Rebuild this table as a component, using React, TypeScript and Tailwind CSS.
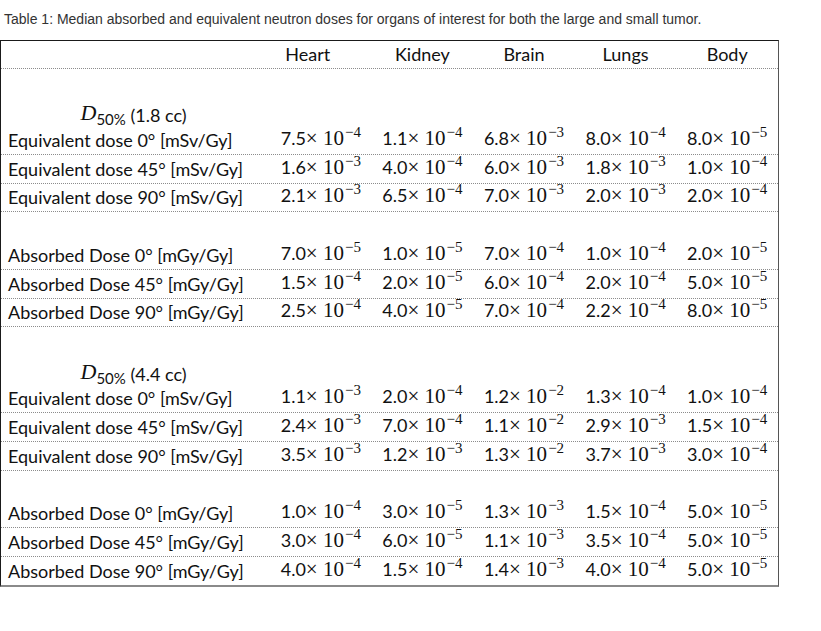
import React from "react";

type Row =
  | { kind: "blank" }
  | { kind: "d"; vol: string }
  | { kind: "data"; label: string; values: [string, string][]; last?: boolean };

const eq = (deg: string) => `Equivalent dose ${deg}° [mSv/Gy]`;
const ab = (deg: string) => `Absorbed Dose ${deg}° [mGy/Gy]`;

const p = (s: string): [string, string][] =>
  s.split(" ").map((t) => {
    const [m, e] = t.split("e");
    return [m, e.replace("-", "−")];
  });

const rows: Row[] = [
  { kind: "blank" },
  { kind: "d", vol: "1.8 cc" },
  { kind: "data", label: eq("0"), values: p("7.5e-4 1.1e-4 6.8e-3 8.0e-4 8.0e-5") },
  { kind: "data", label: eq("45"), values: p("1.6e-3 4.0e-4 6.0e-3 1.8e-3 1.0e-4") },
  { kind: "data", label: eq("90"), values: p("2.1e-3 6.5e-4 7.0e-3 2.0e-3 2.0e-4") },
  { kind: "blank" },
  { kind: "data", label: ab("0"), values: p("7.0e-5 1.0e-5 7.0e-4 1.0e-4 2.0e-5") },
  { kind: "data", label: ab("45"), values: p("1.5e-4 2.0e-5 6.0e-4 2.0e-4 5.0e-5") },
  { kind: "data", label: ab("90"), values: p("2.5e-4 4.0e-5 7.0e-4 2.2e-4 8.0e-5") },
  { kind: "blank" },
  { kind: "d", vol: "4.4 cc" },
  { kind: "data", label: eq("0"), values: p("1.1e-3 2.0e-4 1.2e-2 1.3e-4 1.0e-4") },
  { kind: "data", label: eq("45"), values: p("2.4e-3 7.0e-4 1.1e-2 2.9e-3 1.5e-4") },
  { kind: "data", label: eq("90"), values: p("3.5e-3 1.2e-3 1.3e-2 3.7e-3 3.0e-4") },
  { kind: "blank" },
  { kind: "data", label: ab("0"), values: p("1.0e-4 3.0e-5 1.3e-3 1.5e-4 5.0e-5") },
  { kind: "data", label: ab("45"), values: p("3.0e-4 6.0e-5 1.1e-3 3.5e-4 5.0e-5") },
  { kind: "data", label: ab("90"), values: p("4.0e-4 1.5e-4 1.4e-3 4.0e-4 5.0e-5"), last: true },
];

function Value({ m, e }: { m: string; e: string }) {
  return (
    <span className="whitespace-nowrap">
      <span>{m}</span>
      <span className="font-['Liberation_Serif',serif] text-[21px]">× 10</span>
      <span className="relative -top-[8px] ml-[1px] font-['Liberation_Serif',serif] text-[15px]">{e}</span>
    </span>
  );
}

const grid = "grid grid-cols-[269px_repeat(5,minmax(0,1fr))]";

export default function App() {
  return (
    <div className="w-[821px] h-[631px] bg-white text-[#111]">
      <p className="pl-[4px] pt-[11px] font-['Liberation_Sans',Arial,sans-serif] text-[14px] leading-[16px] text-[#333]">
        Table 1: Median absorbed and equivalent neutron doses for organs of interest for both the large and small tumor.
      </p>
      <div className="mt-[13px] w-[779px] border-t border-l border-t-[#1a1a1a] border-l-[#1a1a1a] border-r border-r-[#555] border-b-2 border-b-[#8a8a8a] font-['Lato','Noto_Sans',sans-serif] text-[18px] leading-none">
        <div className={`${grid} h-[28px] border-b border-dotted border-b-[#8c8c8c]`}>
          <div />
          <div className="flex items-end justify-center pb-[5px] pr-[26px]">Heart</div>
          <div className="flex items-end justify-center pb-[5px]">Kidney</div>
          <div className="flex items-end justify-center pb-[5px]">Brain</div>
          <div className="flex items-end justify-center pb-[5px]">Lungs</div>
          <div className="flex items-end justify-center pb-[5px]">Body</div>
        </div>
        {rows.map((r, i) => {
          if (r.kind === "blank") return <div key={i} className="h-[28.7px]" />;
          if (r.kind === "d")
            return (
              <div key={i} className={`${grid} h-[28.7px]`}>
                <div className="flex items-end justify-center pb-[2px] pr-[4px]">
                  <span className="font-['Liberation_Serif',serif] italic text-[22px]">D</span>
                  <span className="relative top-[3px] text-[15px]">50%</span>
                  <span>&nbsp;({r.vol})</span>
                </div>
              </div>
            );
          return (
            <div
              key={i}
              className={`${grid} h-[28.7px] ${r.last ? "" : "border-b border-dotted border-b-[#8c8c8c]"}`}
            >
              <div className="flex items-end pb-[5px] pl-[7px] whitespace-nowrap">{r.label}</div>
              {r.values.map(([m, e], j) => (
                <div key={j} className="flex items-end justify-center pb-[5px]">
                  <Value m={m} e={e} />
                </div>
              ))}
            </div>
          );
        })}
      </div>
    </div>
  );
}
